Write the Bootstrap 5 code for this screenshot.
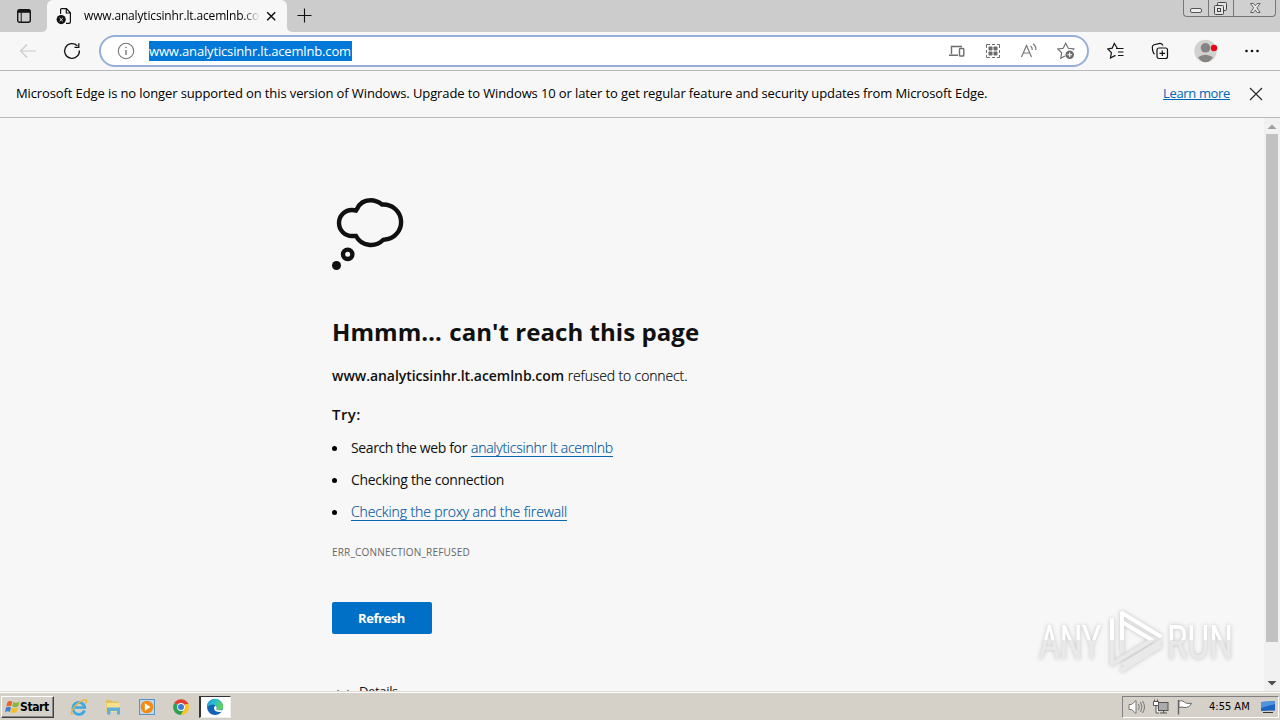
<!DOCTYPE html>
<html lang="en">
<head>
<meta charset="utf-8">
<meta name="viewport" content="width=device-width, initial-scale=1">
<title>www.analyticsinhr.lt.acemlnb.com</title>
<link href="https://cdn.jsdelivr.net/npm/bootstrap@5.3.0/dist/css/bootstrap.min.css" rel="stylesheet">
<style>
html,body{height:100%}
body{font-family:"Open Sans","Noto Sans",sans-serif;font-size:13px;color:#000;background:#f7f7f7;overflow:hidden;white-space:nowrap}
svg{display:block;flex:none}
.tabstrip{height:32px;background:#ccc}
.tabmenu{width:47px;height:32px;background:#ccc;border-bottom-right-radius:5px;padding:8px 0 0 16px}
.tabsel{width:240px;height:32px;background:#f7f7f7;border-radius:6px 6px 0 0;padding:0 9px}
.tabtitle{width:176px;margin-left:11px;font-size:12px;letter-spacing:-.16px;-webkit-mask-image:linear-gradient(90deg,#000 158px,transparent 176px);mask-image:linear-gradient(90deg,#000 158px,transparent 176px)}
.tabrest{border-bottom-left-radius:5px;background:#ccc}
.under{background:#f7f7f7}
.winbtns{height:17px;width:93px;border:1px solid #777;border-top:0;border-radius:0 0 4px 4px;margin-right:4px;background:#d0d0d0}
.winbtns>span{border-right:1px solid #777;display:flex;justify-content:center}
.winbtns>span:last-child{border:0}
.toolbar{height:39px;border-bottom:1px solid #b9b9b9}
.omni{width:990px;height:32px;border:2px solid #97afd8;border-radius:16px;background:#fff;margin-left:18px;padding:0 12px 0 16px}
.urltext{background:#0078d7;color:#fff;height:20px;line-height:20px;width:203px;letter-spacing:-.156px}
.infobar{height:47px;border-bottom:1px solid #b9b9b9;padding:0 15px 0 16px}
.infotext{letter-spacing:-.112px}
.learn{color:#0066b4;letter-spacing:-.35px}
.viewport{height:574px}
.content-col{margin-left:332px;padding-top:80px;color:#101010}
h1{font-size:24px;font-weight:700;letter-spacing:.055px;line-height:32px;margin:46px 0 0}
.body14{font-size:14px;line-height:20px}
.lt{font-weight:300;color:#000;-webkit-text-stroke:.15px}
.linky{color:#0055a0;text-decoration:none;border-bottom:1px solid #0a66b0;line-height:16px;display:inline-block}
.tips li{height:32px;display:flex;align-items:center}
.tips li::before{content:"";width:5px;height:5px;border-radius:50%;background:#000;margin-right:14px}
.err{font-size:10px;letter-spacing:.19px;line-height:14px;color:#666}
.refresh{width:100px;height:32px;border-radius:2px;background:#006fc6;color:#fff;font-size:13px;font-weight:700;letter-spacing:-.41px;padding:1px 1px 0 0}
.sbar{width:16px;background:#f1f1f1}
.thumb{width:12px;height:508px;background:#c1c1c1}
.taskbar{height:28px;background:#d5d0c8;border-top:1px solid #fff;box-shadow:0 -1px 0 #dcdad5}
.startbtn{width:53px;height:22px;margin-left:1px;border:1px solid;border-color:#fff #404040 #404040 #fff;box-shadow:inset -1px -1px #888;font-size:12px;font-weight:700;font-family:"DejaVu Sans Condensed","Open Sans",sans-serif;letter-spacing:-.4px}
.active-app{width:32px;height:22px;background:#fff;border:1px solid;border-color:#333 #eee #eee #333;border-left-width:2px}
.tray{width:157px;height:22px;border:1px solid;border-color:#808080 #fff #fff #808080;padding-left:5px;margin-right:1px;font-size:11px;font-family:"DejaVu Sans Condensed",sans-serif}
.watermark{left:1030px;top:600px}
</style>
</head>
<body class="d-flex flex-column">
<header>
  <div class="tabstrip d-flex">
    <div class="under"><div class="tabmenu"><svg width="16" height="16" viewBox="0 0 16 16" fill="none" stroke="#151515" stroke-width="1.4"><rect x="1.7" y="1.7" width="12.6" height="12.6" rx="2"/><path d="M2 3.2h12" stroke-width="3.2"/><path d="M5.2 4v10" stroke-width="1"/></svg></div></div>
    <div class="tabsel d-flex align-items-center">
      <svg width="17" height="18" viewBox="0 0 17 18" fill="none" stroke="#111" stroke-width="1.2"><path d="M4.6 7V2.6Q4.6 1.6 5.6 1.6H10.5L14.4 5.8V15Q14.4 16.3 13 16.3H10M10.3 1.8V6H14.2"/><circle cx="5.2" cy="12.6" r="4.6" fill="#111" stroke="none"/><path d="M3.6 11l3.2 3.2m0-3.2l-3.2 3.2" stroke="#fff" stroke-width="1"/></svg>
      <span class="tabtitle overflow-hidden">www.analyticsinhr.lt.acemlnb.com</span>
      <svg style="margin-left:5px" width="12" height="12" viewBox="0 0 12 12" stroke="#111" stroke-width="1.5"><path d="M2.2 2.2l8 8m0-8l-8 8"/></svg>
    </div>
    <div class="under flex-grow-1"><div class="tabrest h-100 d-flex justify-content-between">
      <svg class="ms-2" style="margin-top:8px" width="18" height="16" viewBox="0 0 18 16" stroke="#111" stroke-width="1.1"><path d="M2.5 7.5h14M9.5 .5v14"/></svg>
      <div class="winbtns d-flex">
        <span style="width:25px"><svg width="24" height="16" viewBox="0 0 24 16"><rect x="6.5" y="8.5" width="11" height="4" rx="1.5" fill="#eee" stroke="#555"/></svg></span>
        <span style="width:25px"><svg width="24" height="16" viewBox="0 0 24 16" fill="#e4e4e4" stroke="#444"><rect x="8.5" y="2.5" width="9" height="8" rx="1"/><rect x="5.500" y="5.500" width="9" height="9" rx="1"/><rect x="8.500" y="8.500" width="3" height="3"/></svg></span>
        <span class="flex-grow-1"><svg width="24" height="16" viewBox="0 0 24 16"><path d="M7.500 3.500h3l1.800 2.300 1.800-2.300h3l-3.200 4.300 3.200 4.700h-3l-1.800-2.600-1.800 2.600h-3l3.200-4.700z" fill="#eee" stroke="#555" stroke-width=".9"/></svg></span>
      </div>
    </div></div>
  </div>
  <div class="toolbar d-flex align-items-center">
    <svg style="margin-left:19px" width="18" height="16" viewBox="0 0 18 16" fill="none" stroke="#cbcbcb" stroke-width="1.2"><path d="M17 8H2M8 1.500L1.500 8 8 14.500"/></svg>
    <svg style="margin-left:26px" width="18" height="18" viewBox="0 0 18 18" fill="none" stroke="#111" stroke-width="1.3"><path d="M16.400 8.500A7.400 7.400 0 1 1 14.300 3.800M15.800 1.200V5.300H11.500"/></svg>
    <div class="omni d-flex align-items-center">
      <svg width="18" height="18" viewBox="0 0 18 18" fill="none" stroke="#777" stroke-width="1.100"><circle cx="9" cy="9" r="7.700"/><path d="M9 8v5" stroke-width="1.400"/><circle cx="9" cy="5.500" r=".8" fill="#777" stroke="none"/></svg>
      <span class="urltext" style="margin-left:14px">www.analyticsinhr.lt.acemlnb.com</span>
      <div class="ms-auto d-flex align-items-center" style="gap:18px">
        <svg width="18" height="16" viewBox="0 0 18 16" fill="none" stroke="#6c6c6c" stroke-width="1.400"><path d="M3.500 11V3.500H14M1 12.300H10"/><rect x="11.500" y="5.500" width="4.300" height="7.500" rx=".8"/></svg>
        <svg width="18" height="18" viewBox="0 0 18 18" fill="#6c6c6c"><path d="M2.500 6V2.500H6M8 2.500h3M13 2.500h2.500V6M15.500 8v3M15.500 13v2.500H13M11 15.500H8M6 15.500H2.500V13M2.500 11V8" fill="none" stroke="#6c6c6c"/><rect x="4.500" y="4.500" width="4" height="4" rx=".8"/><rect x="9.500" y="4.500" width="4" height="4" rx=".8"/><rect x="4.500" y="9.500" width="4" height="4" rx=".8"/><rect x="9.500" y="9.500" width="4" height="4" rx=".8"/></svg>
        <svg width="19" height="18" viewBox="0 0 19 18" fill="none" stroke="#777" stroke-width="1.200"><path d="M1.500 15L6.500 3.500 11.500 15M3.200 11h6.600M10.500 4q2 1.500 1.700 4M13 1.800q3.300 2.500 2.800 6.200"/></svg>
        <svg width="18" height="18" viewBox="0 0 18 18" fill="none" stroke="#6c6c6c" stroke-width="1.100"><path d="M15.800 8L16.800 7 11.300 6.200 8.700 1.200 6.200 6.200 .8 7 4.700 10.800 3.800 16.200 8 14"/><circle cx="12.700" cy="12.800" r="4.300" fill="#6c6c6c" stroke="none"/><path d="M12.700 10.500v4.600M10.400 12.800H15" stroke="#fff"/></svg>
      </div>
    </div>
    <svg style="margin-left:18px" width="18" height="18" viewBox="0 0 18 18" fill="none" stroke="#111" stroke-width="1.200"><path d="M10.200 6L7.300 1.500 5.200 6.200 .8 7 4.400 10.600 3.500 16 8.500 13.400M9 6.500h7.500M11 10h5.500M11 13.500h5.500"/></svg>
    <svg style="margin-left:26px" width="18" height="18" viewBox="0 0 18 18" fill="none" stroke="#111" stroke-width="1.200"><rect x="6" y="6" width="10.500" height="10.500" rx="2"/><path d="M11.300 8.500v5.600M8.500 11.300h5.600M3.500 12.200Q1.500 10.500 1.300 5Q1.300 3.500 3 2.700L9 1.300Q11 1.200 12 3.500"/></svg>
    <svg style="margin-left:25px" width="26" height="24" viewBox="0 0 26 24"><circle cx="11.500" cy="12" r="11.200" fill="#d3d1cf"/><circle cx="11.500" cy="8.800" r="4.800" fill="#858483"/><path d="M4 18.200q7.500-5 15 0-3 5-7.500 5t-7.500-5z" fill="#858483"/><circle cx="20" cy="9" r="3.200" fill="#e30b17"/></svg>
    <svg style="margin-left:23px" width="18" height="6" viewBox="0 0 18 6" fill="#111"><circle cx="3.500" cy="3" r="1.300"/><circle cx="9" cy="3" r="1.300"/><circle cx="14.500" cy="3" r="1.300"/></svg>
  </div>
  <div class="infobar d-flex align-items-center">
    <span class="infotext">Microsoft Edge is no longer supported on this version of Windows. Upgrade to Windows 10 or later to get regular feature and security updates from Microsoft Edge.</span>
    <a class="learn ms-auto" href="#">Learn more</a>
    <svg class="ms-3" style="margin-right:1px" width="18" height="16" viewBox="0 0 18 16" stroke="#222" stroke-width="1.100"><path d="M4 2l12 12m0-12l-12 12"/></svg>
  </div>
</header>
<main class="viewport d-flex overflow-hidden">
  <div class="flex-grow-1"><div class="content-col">
    <svg width="74" height="72" viewBox="0 0 74 72" fill="none" stroke="#101010" stroke-width="4.400"><path d="M24 12.500A15 13.500 0 0 0 20 12A13 13 0 0 0 20 38H24A17 17 0 0 0 51 42Q52 41.500 53 41.500A17.500 17.500 0 1 0 50 6.500Q44 2 38 2.300Q29 2.500 25 11z"/><circle cx="15.700" cy="56.300" r="4.700"/><circle cx="4.500" cy="67.500" r="4.500" fill="#101010" stroke="none"/></svg>
    <h1>Hmmm<span style="letter-spacing:1.200px">…</span> can't reach this page</h1>
    <p class="body14 mb-0" style="margin-top:18px"><b class="fw-semibold" style="letter-spacing:-.04px">www.analyticsinhr.lt.acemlnb.com</b> <span class="lt" style="letter-spacing:-.13px">refused to connect.</span></p>
    <p class="mb-0 fw-semibold" style="font-size:15px;line-height:20px;letter-spacing:.45px;margin-top:18px">Try:</p>
    <ul class="tips list-unstyled body14 mb-0" style="margin-top:8px">
      <li><span style="letter-spacing:-.38px;width:120px">Search the web for</span><a class="linky lt" style="letter-spacing:-.25px" href="#">analyticsinhr lt acemlnb</a></li>
      <li><span style="letter-spacing:-.31px">Checking the connection</span></li>
      <li><a class="linky lt" style="letter-spacing:-.11px" href="#">Checking the proxy and the firewall</a></li>
    </ul>
    <div class="err" style="margin-top:17px">ERR_CONNECTION_REFUSED</div>
    <button class="btn refresh d-block" style="margin-top:43px">Refresh</button>
    <div class="d-flex align-items-center" style="margin-top:48px"><svg style="margin:2px 10px 0 5px" width="12" height="12" viewBox="0 0 12 12" fill="none" stroke="#777" stroke-width="1.200"><path d="M.5 3L6 8.500 11.500 3"/></svg><span style="letter-spacing:-.34px">Details</span></div>
  </div></div>
  <div class="sbar d-flex flex-column align-items-center">
    <svg width="16" height="16" viewBox="0 0 16 16" fill="#a0a0a0"><path d="M3.500 11L8 6.500 12.500 11z"/></svg>
    <div class="thumb"></div>
    <svg class="mt-auto" width="16" height="18" viewBox="0 0 16 18" fill="#505050"><path d="M3.500 7h9L8 11.500z"/></svg>
  </div>
</main>
<footer class="taskbar d-flex align-items-center">
  <div class="startbtn d-flex align-items-center">
    <svg style="margin-left:3px" width="15" height="16" viewBox="0 0 15 16"><path d="M2.500 3Q5 1 7.300 2.800L6.200 7.300Q4 6 1.300 7.600z" fill="#e8622a"/><path d="M8.300 3Q11 4.500 14.500 2.800L13.200 7.500Q10 9 7.200 7.600z" fill="#86b843"/><path d="M1 8.600Q3.500 7 6 8.400L4.800 13Q2.500 11.500 0 13.200z" fill="#3f7fcb"/><path d="M7 8.700Q10 10 12.800 8.600L11.500 13.200Q8.500 14.800 5.800 13.200z" fill="#f5bd28"/></svg>
    <span>Start</span>
  </div>
  <svg style="margin-left:16px" width="18" height="18" viewBox="0 0 18 18" fill="none"><path d="M14.500 12.500A6 6 0 1 1 14.800 9.500H4" stroke="#3ba7e4" stroke-width="2.700"/><path d="M3 16Q-1 16 4.500 8.500 12 1 16 1.800 17.500 2.500 15.500 5.500" stroke="#e6b73e" stroke-width="1.400"/></svg>
  <svg style="margin-left:16px" width="18" height="18" viewBox="0 0 18 18"><path d="M2 2h5l1 1.500h6.500V14H2z" fill="#dfc25c"/><path d="M2.500 5h13v9h-13z" fill="#f5e08e"/><path d="M3 9.500h13v7h-3V13H6.500v3.500H3z" fill="#62aeda"/></svg>
  <svg style="margin-left:16px" width="18" height="18" viewBox="0 0 18 18"><rect x="1.500" y="1.500" width="15" height="15" fill="#bcd8ec" stroke="#5b94c4"/><circle cx="9" cy="9" r="6.300" fill="#f38a12"/><path d="M6.800 5.200L12.500 9l-5.700 3.800z" fill="#fff"/></svg>
  <svg style="margin-left:16px" width="18" height="18" viewBox="0 0 18 18"><path d="M9 9L2.200 5A8 8 0 0 1 15.900 5z" fill="#e23f32"/><path d="M9 9L2.200 5A8 8 0 0 0 9 17L12 11z" fill="#2da14d"/><path d="M9 9L15.900 5A8 8 0 0 1 9 17L12.500 10.500z" fill="#f8c51c"/><path d="M9 5h6.900l.5 1H9z" fill="#e23f32"/><circle cx="9" cy="9" r="3.900" fill="#fff"/><circle cx="9" cy="9" r="3" fill="#3c7be0"/></svg>
  <div class="active-app d-flex align-items-center justify-content-center" style="margin-left:9px"><svg style="margin-right:2px" width="18" height="18" viewBox="0 0 18 18"><defs><linearGradient id="eg" x1="0" y1="0" x2="1" y2=".4"><stop offset="0" stop-color="#2196dc"/><stop offset=".55" stop-color="#2fbfc8"/><stop offset="1" stop-color="#5fd352"/></linearGradient></defs><circle cx="9" cy="9" r="8" fill="#1262b5"/><path d="M1 9A8 8 0 0 1 17 8.500Q17 12 13 12 10 12 10.500 10.500 11.500 8.800 9.500 7.300 5.500 5 1 9z" fill="url(#eg)"/><path d="M10.500 10.500Q10 12 13 12.200 15.500 12.300 16.300 11.500L15.300 14Q9 14.500 8 11 7.800 8.500 9.500 7.500 11.300 8.800 10.500 10.500z" fill="#fff"/></svg></div>
  <div class="tray ms-auto d-flex align-items-center">
    <svg width="18" height="16" viewBox="0 0 18 16" fill="#fff" stroke="#777"><path d="M1 5.500h2.500L8 1.500v13L3.500 10.500H1z"/><path d="M10.500 5q1.500 3 0 6M12.500 3q3 5 0 10M14.500 2q4 6 0 12" fill="none"/></svg>
    <svg style="margin-left:6px" width="18" height="16" viewBox="0 0 18 16" fill="#fff" stroke="#555"><rect x="6.500" y="3.500" width="9.500" height="8" fill="#aaa"/><path d="M8 14h7M11.500 11.500V14"/><path d="M1.500 2.500h5v4h-5zM2.500 2.500V.5M5.500 2.500V.5M4 6.500V14h3"/></svg>
    <svg style="margin-left:6px" width="18" height="16" viewBox="0 0 18 16" fill="#fff" stroke="#666"><path d="M2.500 1v14.500" stroke-width="1.400"/><path d="M3 2Q6 1 8.500 3 9.500 5 15.500 4.200 13.500 9 8 8.500 6.500 7.500 3 8.500z"/></svg>
    <span style="margin:2px 0 0 15px">4:55 AM</span>
    <svg class="ms-auto" width="19" height="16" viewBox="0 0 19 16"><path d="M2 3L16 2V11.500L2 12z" fill="#1e63c0"/><path d="M2 3L16 2V5L2 9z" fill="#4f93dd"/><path d="M4 13.500h10" stroke="#333"/></svg>
  </div>
</footer>
<svg class="watermark position-absolute" width="210" height="80" viewBox="0 0 210 80" style="filter:drop-shadow(0 0 2px rgba(0,0,0,.22))">
  <defs><linearGradient id="wm" x1="0" y1="0" x2="0" y2="80" gradientUnits="userSpaceOnUse"><stop offset=".5" stop-color="#fff"/><stop offset=".5" stop-color="#e9e9e9"/></linearGradient></defs>
  <g fill="url(#wm)" font-family="Roboto,sans-serif" font-size="49">
    <text x="9" y="59" textLength="62" lengthAdjust="spacingAndGlyphs">ANY</text>
    <text x="137" y="59" textLength="66" lengthAdjust="spacingAndGlyphs">RUN</text>
  </g>
  <g fill="none" stroke="url(#wm)" stroke-width="4" stroke-linejoin="round" stroke-linecap="round"><path d="M92 51V13L130 36 M130 42L94 64 M92 22L122 40 92 58 M82 20V64L92 58 M92 70L130 46"/></g>
</svg>
<script src="https://cdn.jsdelivr.net/npm/bootstrap@5.3.0/dist/js/bootstrap.bundle.min.js"></script>
</body>
</html>
